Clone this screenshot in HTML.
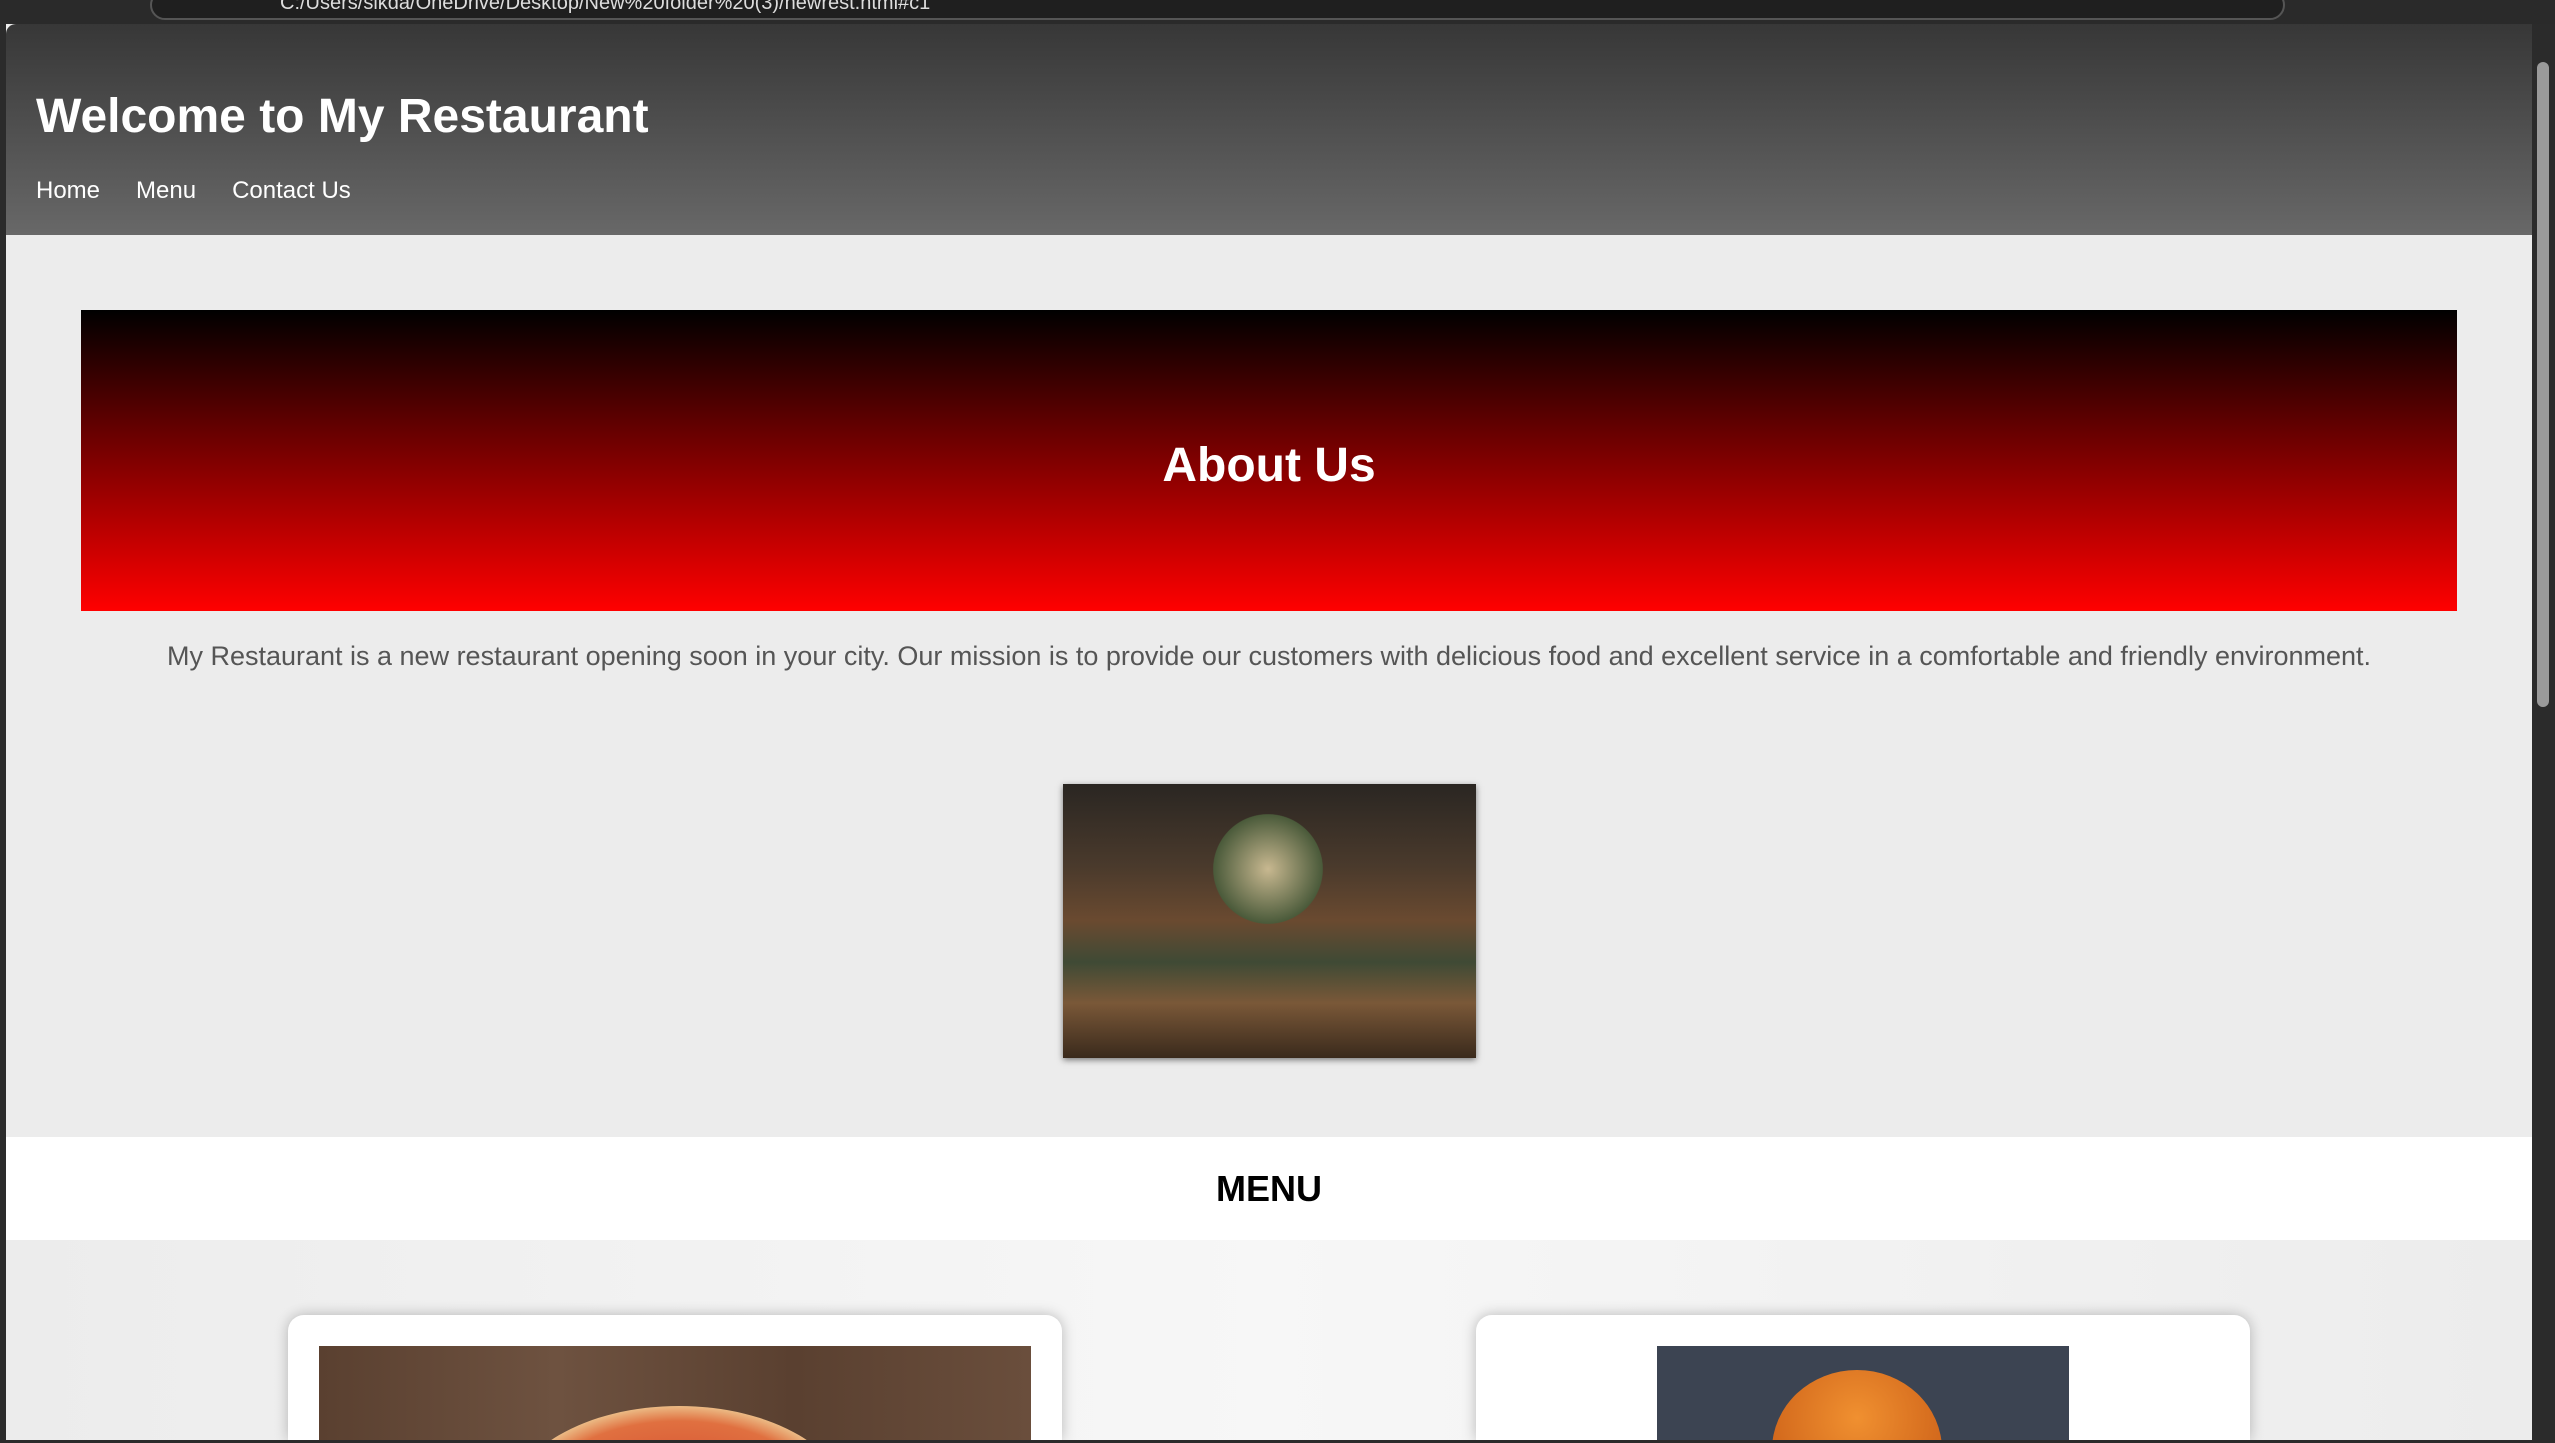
<!DOCTYPE html>
<html style="overflow:hidden"><head><style>
*{margin:0;padding:0;box-sizing:border-box}
html,body{width:2555px;height:1443px;overflow:hidden}
body{background:#2b2b2b;font-family:"Liberation Sans",Arial,sans-serif;position:relative}
.a{position:absolute}
</style></head><body>
<div class="a" style="left:0;top:0;width:2555px;height:24px;background:#2a2a2a"></div>
<div class="a" style="left:150px;top:-10px;width:2135px;height:30px;border:2px solid #555;border-radius:16px;background:#1f1f1f"></div>
<div class="a" style="left:280px;top:-8px;color:#ddd;font-size:20px">C:/Users/sikda/OneDrive/Desktop/New%20folder%20(3)/newrest.html#c1</div>
<div class="a" style="left:6px;top:24px;width:2526px;height:1416px;background:#ececec;overflow:hidden">
 <div class="a" style="left:0;top:0;width:2526px;height:211px;background:linear-gradient(#373737,#686868);border-radius:10px 0 0 0"></div>
 <div class="a" style="left:30px;top:64px;color:#fff;font-size:48px;font-weight:bold;line-height:58px">Welcome to My Restaurant</div>
 <div class="a" style="left:30px;top:153px;color:#fff;font-size:24px;line-height:28px">Home<span style="margin-left:36px">Menu</span><span style="margin-left:36px">Contact Us</span></div>
 <div class="a" style="left:75px;top:286px;width:2376px;height:301px;background:linear-gradient(#000,#f00)"></div>
 <div class="a" style="left:75px;top:414px;width:2376px;text-align:center;color:#fff;font-size:48px;font-weight:bold;line-height:56px">About Us</div>
 <div class="a" style="left:0;top:616px;width:2526px;text-align:center;color:#555;font-size:27px;line-height:32px">My Restaurant is a new restaurant opening soon in your city. Our mission is to provide our customers with delicious food and excellent service in a comfortable and friendly environment.</div>
 <div class="a" style="left:1057px;top:760px;width:413px;height:274px;box-shadow:0 2px 6px rgba(0,0,0,.5);background:linear-gradient(#2a2622 0%,#4a3a2c 30%,#6a4a30 50%,#3f4a35 65%,#7a5838 80%,#3a2a1c 100%)">
  <div class="a" style="left:150px;top:30px;width:110px;height:110px;background:radial-gradient(#c8b890,#4a5a3a 70%,transparent 71%)"></div>
 </div>
 <div class="a" style="left:0;top:1113px;width:2526px;height:103px;background:#fff"></div>
 <div class="a" style="left:0;top:1140px;width:2526px;text-align:center;font-size:36px;font-weight:bold;line-height:50px;color:#000">MENU</div>
 <div class="a" style="left:0;top:1216px;width:2526px;height:200px;background:linear-gradient(90deg,#ececec,#f7f7f7 50%,#ececec)"></div>
 <div class="a" style="left:282px;top:1291px;width:774px;height:125px;background:#fff;border-radius:16px 16px 0 0;box-shadow:0 0 14px rgba(0,0,0,.25)"></div>
 <div class="a" style="left:313px;top:1322px;width:712px;height:94px;background:linear-gradient(90deg,#5a4030,#6e5240,#5a4030,#6a4e3c);overflow:hidden">
  <div class="a" style="left:190px;top:60px;width:340px;height:200px;border-radius:50%;background:radial-gradient(#d0402a,#e07040 60%,#f0d8a0 75%)"></div>
 </div>
 <div class="a" style="left:1470px;top:1291px;width:774px;height:125px;background:#fff;border-radius:16px 16px 0 0;box-shadow:0 0 14px rgba(0,0,0,.25)"></div>
 <div class="a" style="left:1651px;top:1322px;width:412px;height:94px;background:#3c4452;overflow:hidden">
  <div class="a" style="left:115px;top:24px;width:170px;height:160px;border-radius:50%;background:radial-gradient(circle at 50% 30%,#f09030,#c05010)"></div>
 </div>
</div>
<div class="a" style="left:2532px;top:24px;width:23px;height:1419px;background:#2b2b2b"></div>
<div class="a" style="left:2537px;top:62px;width:12px;height:645px;background:#9a9a9a;border-radius:6px"></div>
</body></html>
